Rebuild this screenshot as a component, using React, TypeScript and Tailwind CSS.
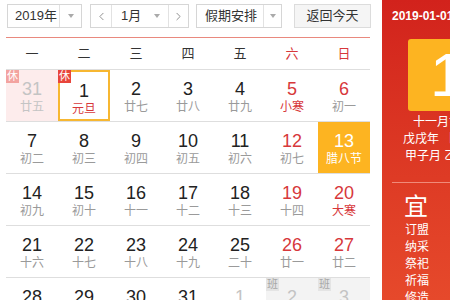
import React from 'react';
import { ChevronLeft, ChevronRight } from 'lucide-react';

type Cell = {
  d: number;
  l: string;
  other?: boolean;
  rest?: boolean;
  work?: boolean;
  fest?: boolean;
  today?: boolean;
  picked?: boolean;
};

const weeks: Cell[][] = [
  [
    { d: 31, l: '廿五', other: true, rest: true },
    { d: 1, l: '元旦', rest: true, fest: true, today: true },
    { d: 2, l: '廿七' },
    { d: 3, l: '廿八' },
    { d: 4, l: '廿九' },
    { d: 5, l: '小寒', fest: true },
    { d: 6, l: '初一' },
  ],
  [
    { d: 7, l: '初二' },
    { d: 8, l: '初三' },
    { d: 9, l: '初四' },
    { d: 10, l: '初五' },
    { d: 11, l: '初六' },
    { d: 12, l: '初七' },
    { d: 13, l: '腊八节', picked: true },
  ],
  [
    { d: 14, l: '初九' },
    { d: 15, l: '初十' },
    { d: 16, l: '十一' },
    { d: 17, l: '十二' },
    { d: 18, l: '十三' },
    { d: 19, l: '十四' },
    { d: 20, l: '大寒', fest: true },
  ],
  [
    { d: 21, l: '十六' },
    { d: 22, l: '十七' },
    { d: 23, l: '十八' },
    { d: 24, l: '十九' },
    { d: 25, l: '二十' },
    { d: 26, l: '廿一' },
    { d: 27, l: '廿二' },
  ],
  [
    { d: 28, l: '廿三' },
    { d: 29, l: '廿四' },
    { d: 30, l: '廿五' },
    { d: 31, l: '廿六' },
    { d: 1, l: '廿七', other: true },
    { d: 2, l: '廿八', other: true, work: true },
    { d: 3, l: '廿九', other: true, work: true },
  ],
];

const weekdays = ['一', '二', '三', '四', '五', '六', '日'];

const Caret = () => (
  <span className="block w-0 h-0 border-x-[3px] border-t-[4px] border-x-transparent border-t-[#aaa]" />
);

const DayCell = ({ cell, col }: { cell: Cell; col: number }) => {
  const weekend = col >= 5;
  let bg = 'bg-white';
  if (cell.picked) bg = 'bg-[#fdb421]';
  else if (cell.other && cell.rest) bg = 'bg-[#fdecec]';
  else if (cell.work) bg = 'bg-[#f3f3f3]';

  let num = weekend ? 'text-[#d7383b]' : 'text-[#222]';
  if (cell.other) num = 'text-[#c4c4c4]';
  if (cell.picked) num = 'text-white';

  let lunar = cell.fest ? 'text-[#d7383b]' : 'text-[#9a9a9a]';
  if (cell.other) lunar = 'text-[#c4c4c4]';
  if (cell.picked) lunar = 'text-white';

  return (
    <div
      className={`relative h-[51px] flex flex-col items-center pt-[9px] ${bg} ${
        cell.today ? 'border-2 border-[#f7b731] pt-[7px]' : ''
      }`}
    >
      {cell.rest && (
        <span
          className={`absolute w-[13px] h-[13px] flex items-center justify-center text-[11px] leading-none text-white ${
            cell.today ? '-left-[2px] -top-[2px] bg-[#e8453c]' : 'left-0 top-0 bg-[#f3a3a0]'
          }`}
        >
          休
        </span>
      )}
      {cell.work && (
        <span className="absolute left-0 top-0 w-[13px] h-[13px] flex items-center justify-center text-[11px] leading-none text-[#a8a8a8] bg-[#e4e4e4]">
          班
        </span>
      )}
      <div className={`text-[18px] leading-[20px] ${num}`}>{cell.d}</div>
      <div className={`text-[12px] leading-[14px] mt-[1px] ${lunar}`}>{cell.l}</div>
    </div>
  );
};

const App: React.FC = () => {
  return (
    <div className="w-[450px] h-[300px] overflow-hidden flex bg-white font-['Liberation_Sans','Noto_Sans_CJK_SC',sans-serif]">
      {/* Left: calendar */}
      <div className="w-[382px] shrink-0 pl-[6px]">
        {/* Toolbar */}
        <div className="flex items-center h-6 mt-1 ml-[1px] text-[13px] text-[#333]">
          <div className="flex w-[75px] h-6 border border-[#d6d6d6]">
            <span className="flex-1 pl-[7px] leading-[22px]">2019年</span>
            <span className="w-[22px] border-l border-[#e2e2e2] flex items-center justify-center">
              <Caret />
            </span>
          </div>
          <div className="flex w-[99px] h-6 ml-2 border border-[#d6d6d6]">
            <span className="w-[21px] border-r border-[#e2e2e2] flex items-center justify-center">
              <ChevronLeft size={13} strokeWidth={1.5} color="#777" />
            </span>
            <span className="w-[56px] flex items-center pl-[9px]">
              <span className="flex-1 leading-[22px]">1月</span>
              <span className="w-[14px] flex justify-start">
                <Caret />
              </span>
            </span>
            <span className="flex-1 border-l border-[#e2e2e2] flex items-center justify-center">
              <ChevronRight size={13} strokeWidth={1.5} color="#777" />
            </span>
          </div>
          <div className="flex w-[86px] h-6 ml-[7px] border border-[#d6d6d6]">
            <span className="flex-1 pl-[8px] leading-[22px]">假期安排</span>
            <span className="w-[18px] border-l border-[#e2e2e2] flex items-center justify-center">
              <Caret />
            </span>
          </div>
          <button className="w-[77px] h-6 ml-[12px] border border-[#dcdcdc] bg-[#f5f5f5] text-[13px] leading-[22px] text-[#333]">
            返回今天
          </button>
        </div>

        <div className="w-[364px] mt-[9px] border-t border-[#e9897e]">
          {/* Weekday header */}
          <div className="grid grid-cols-7 h-[32px] border-b border-[#dedede] text-[13px]">
            {weekdays.map((w, i) => (
              <div
                key={w}
                className={`flex items-center justify-center ${i >= 5 ? 'text-[#d7383b]' : 'text-[#333]'}`}
              >
                {w}
              </div>
            ))}
          </div>
          {weeks.map((week, r) => (
            <div key={r} className="grid grid-cols-7 border-b border-[#dedede]">
              {week.map((cell, c) => (
                <DayCell key={c} cell={cell} col={c} />
              ))}
            </div>
          ))}
        </div>
      </div>

      {/* Right: day detail */}
      <div className="flex-1 overflow-hidden bg-gradient-to-b from-[#d2221c] to-[#e6492b] text-white">
        <div className="w-[160px]">
          <div className="pl-[10px] pt-[9px] text-[12px] leading-[14px] font-bold whitespace-nowrap">
            2019-01-01 星期二
          </div>
          <div className="ml-[26px] mt-[16px] w-[96px] h-[72px] rounded-[3px] bg-[#fdb421] flex items-center pl-[22px]">
            <span className="text-[62px] leading-none">1</span>
          </div>
          <div className="mt-[3px] pl-[31px] text-[12px] leading-[17px] whitespace-nowrap">十一月廿六</div>
          <div className="pl-[21px] text-[12px] leading-[17px] whitespace-nowrap">戊戌年 【狗年】</div>
          <div className="pl-[23px] text-[12px] leading-[17px] whitespace-nowrap">甲子月 乙酉日</div>
          <div className="ml-[10px] mt-[17px] h-px bg-[#f08a7a]" />
          <div className="pl-[22px] mt-[10px] text-[24px] leading-[28px]">宜</div>
          <div className="pl-[23px] mt-[1px] text-[12px] leading-[17px]">
            <div>订盟</div>
            <div>纳采</div>
            <div>祭祀</div>
            <div>祈福</div>
            <div>修造</div>
          </div>
        </div>
      </div>
    </div>
  );
};

export default App;
